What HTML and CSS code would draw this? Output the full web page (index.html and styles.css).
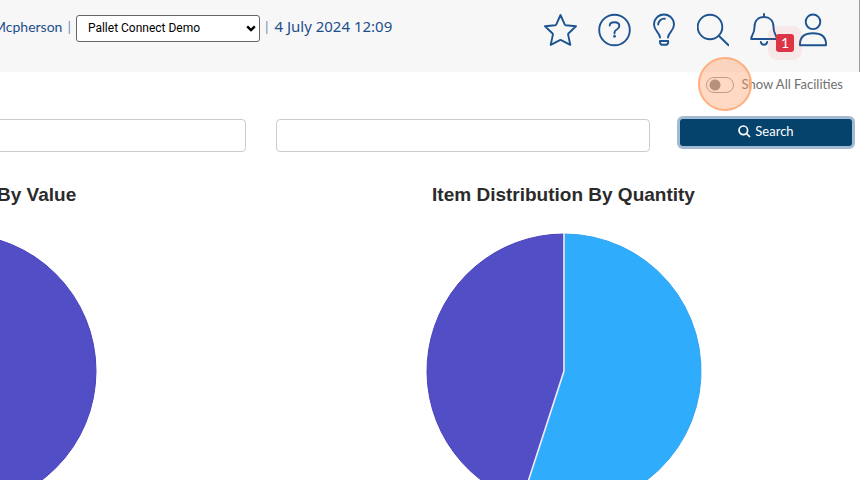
FILE: index.html
```html
<!DOCTYPE html>
<html lang="en">
<head>
    <meta charset="UTF-8">
    <meta name="viewport" content="width=device-width, initial-scale=1.0">
    <title>Pallet Connect</title>
    <link rel="stylesheet" href="styles.css">
</head>
<body>
    <header class="topbar">
        <div class="session">
            <span>Mcpherson</span>
            <span class="divider">|</span>
            <div class="company">
                <select class="company-select" aria-label="Company">
                    <option>Pallet Connect Demo</option>
                </select>
                <svg class="chevron" width="10" height="7" viewBox="0 0 10 7"><path d="M1.2 1.3L5 5L8.8 1.3"/></svg>
            </div>
            <span class="divider">|</span>
            <span class="date">4 July 2024 12:09</span>
        </div>
        <nav class="icons">
            <a href="#" aria-label="Favourites">
                <svg width="33" height="34" viewBox="0.5 0 33 34"><path d="M17 2L21.3 11.6Q21.6 12.2 22.3 12.3L32.5 13.2L24.9 20.5Q24.5 21 24.6 21.6L26.8 31.9L17.6 27.2Q17 26.9 16.4 27.2L7.2 31.9L9.4 21.6Q9.5 21 9.1 20.5L1.5 13.2L11.7 12.3Q12.4 12.2 12.7 11.6Z"/></svg>
            </a>
            <a href="#" aria-label="Help">
                <svg width="33" height="34" viewBox="0.5 0 33 34"><circle cx="17" cy="17" r="15.3"/><path d="M12.2 12.5Q12.4 9.3 17 9.3Q21.8 9.3 21.8 13Q21.8 15.1 19.3 16.5Q17 17.8 17 19.5V20.5"/><circle class="dot" cx="17" cy="23.3" r="1.4"/></svg>
            </a>
            <a href="#" aria-label="Tips">
                <svg width="24" height="34" viewBox="-1 0 24 34"><path d="M7 24.5C6.7 19.5 1 17.7 1 11.5A10 10 0 0 1 21 11.5C21 17.7 15.3 19.5 15 24.5M5.2 11.5A6 6 0 0 1 11.8 5.7M7 28H15.2V29.5Q14.8 31.8 12.6 31.8H9.6Q7.4 31.8 7 29.5Z"/></svg>
            </a>
            <a href="#" aria-label="Search">
                <svg width="32" height="34" viewBox="0 0 32 34"><circle cx="13" cy="14" r="12.3"/><path d="M21.8 22.8L31.5 32.2"/></svg>
            </a>
            <a href="#" class="bell" aria-label="Notifications">
                <svg width="28" height="34" viewBox="0 0 28 34"><path d="M14 1V4M4.5 14C4.5 7.5 8.5 4 14 4S23.5 7.5 23.5 14C23.5 21.5 26.8 21.5 26.8 26H1.2C1.2 21.5 4.5 21.5 4.5 14ZM10.8 29Q11.5 31.8 14 31.8T17.2 29"/></svg>
                <span class="badge">1</span>
            </a>
            <a href="#" aria-label="Account">
                <svg width="28" height="34" viewBox="0 0 28 34"><circle cx="14" cy="8.8" r="7.3"/><path d="M1 32.2V30.5Q1.5 20.3 14 20.3T27 30.5V32.2Z"/></svg>
            </a>
        </nav>
    </header>

    <main class="page">
        <div class="facilities">
            <label class="toggle">
                <span class="toggle-box">
                    <input type="checkbox">
                    <span class="click-mark"></span>
                </span>
                <span>Show All Facilities</span>
            </label>
        </div>

        <form class="filters">
            <input type="text" aria-label="Item">
            <input type="text" aria-label="Location">
            <button type="button">
                <svg width="13" height="13" viewBox="0 0 13 13"><circle cx="5.3" cy="5.3" r="4.3"/><path d="M8.5 8.5L12 12"/></svg>
                Search
            </button>
        </form>

        <div class="charts">
            <section class="chart">
                <h2>Item Distribution By Value</h2>
                <svg width="276" height="276" viewBox="-138 -138 276 276">
                    <circle class="slice-purple" r="137"/>
                </svg>
            </section>
            <section class="chart">
                <h2>Item Distribution By Quantity</h2>
                <svg width="276" height="276" viewBox="-138 -138 276 276">
                    <path class="slice-blue" d="M0 0V-137A137 137 0 1 1 -42.3 130.3Z"/>
                    <path class="slice-purple" d="M0 0L-42.3 130.3A137 137 0 0 1 0 -137Z"/>
                    <path class="split" d="M0 -138V0L-42.6 131.3"/>
                </svg>
            </section>
        </div>
    </main>
</body>
</html>
```
FILE: styles.css
```css
* {
    box-sizing: border-box;
}
body {
    margin: 0;
    height: 100vh;
    overflow: hidden;
    background-color: white;
    font-family: Lato, sans-serif;
    font-size: 14px;
}
.topbar {
    display: flex;
    justify-content: space-between;
    height: 72px;
    padding-right: 32px;
    background-color: #f7f7f7;
    border-right: 1px solid #999;
    color: #1d4f8c;
}
.session {
    display: flex;
    align-items: baseline;
    gap: 5px;
    margin: 15px 0 0 -7px;
    white-space: nowrap;
}
.divider {
    color: #6f8fb8;
}
.date {
    padding-left: 1px;
    font-family: "Noto Sans", sans-serif;
    font-size: 15px;
    line-height: 20px;
}
.company {
    position: relative;
}
.company-select {
    display: block;
    width: 184px;
    height: 27px;
    padding: 0 11px 2px;
    appearance: none;
    background-color: white;
    border: 1px solid #666;
    border-radius: 3px;
    color: black;
    font-family: Roboto, sans-serif;
    font-size: 12px;
}
.chevron {
    position: absolute;
    top: 10px;
    right: 4px;
    fill: none;
    stroke: black;
    stroke-width: 2.4;
    pointer-events: none;
}
.icons {
    display: flex;
    gap: 21px;
    padding-top: 13px;
}
.icons svg {
    display: block;
    fill: none;
    stroke: #1d5490;
    stroke-width: 1.9;
    stroke-linejoin: round;
    stroke-linecap: round;
}
.icons .dot {
    fill: #1d5490;
    stroke: none;
}
.bell {
    position: relative;
    height: 34px;
}
.badge {
    position: absolute;
    top: 21px;
    left: 26px;
    width: 18px;
    height: 18px;
    background-color: #dc3545;
    border-radius: 3px;
    box-shadow: 0 0 0 8px rgba(255, 60, 60, 0.07);
    color: white;
    font-size: 14px;
    line-height: 17px;
    text-align: center;
}
.page {
    color: #2b2b2b;
}
.facilities {
    display: flex;
    justify-content: flex-end;
    padding: 5px 17px 0 0;
}
.toggle {
    display: flex;
    align-items: flex-start;
    gap: 8px;
    color: #707070;
    font-size: 13px;
    line-height: 15px;
}
.toggle-box {
    position: relative;
    height: 16px;
}
.toggle input {
    display: block;
    width: 28px;
    height: 16px;
    margin: 0;
    appearance: none;
    background: radial-gradient(circle at 8px 7px, #888 5px, transparent 6px);
    border: 1px solid #999;
    border-radius: 8px;
}
/* click highlight over the toggle */
.click-mark {
    position: absolute;
    top: -20px;
    left: -8px;
    width: 54px;
    height: 54px;
    background-color: rgba(255, 160, 105, 0.4);
    border: 2px solid #ffae7c;
    border-radius: 50%;
    pointer-events: none;
}
.filters {
    display: grid;
    grid-template-columns: 1fr 1fr 172px;
    align-items: start;
    gap: 30px;
    margin: 26px 8px 0 -128px;
}
.filters input {
    width: 100%;
    height: 33px;
    padding: 4px 8px;
    border: 1px solid #ccc;
    border-radius: 4px;
}
.filters button {
    display: flex;
    align-items: center;
    justify-content: center;
    gap: 4px;
    height: 27px;
    padding: 0 0 3px;
    background-color: #05426c;
    border: none;
    border-radius: 3px;
    box-shadow: 0 0 0 3px #a3bad2;
    color: white;
    font-family: Lato, sans-serif;
    font-size: 13px;
    cursor: pointer;
}
.filters button svg {
    fill: none;
    stroke: white;
    stroke-width: 1.7;
}
.charts {
    display: grid;
    grid-template-columns: 1fr 1fr;
    margin: 31px -6px 0 -344px;
}
.chart {
    display: flex;
    flex-direction: column;
    align-items: center;
}
.chart h2 {
    margin: 0 0 26px;
    font-family: "Liberation Sans", Arial, sans-serif;
    font-size: 19px;
    line-height: 24px;
}
.slice-purple {
    fill: #524ec5;
    stroke: #4a41bd;
}
.slice-blue {
    fill: #30acfc;
    stroke: #30a3f4;
}
.split {
    fill: none;
    stroke: #f0f0ff;
    stroke-width: 1.6;
}
```
